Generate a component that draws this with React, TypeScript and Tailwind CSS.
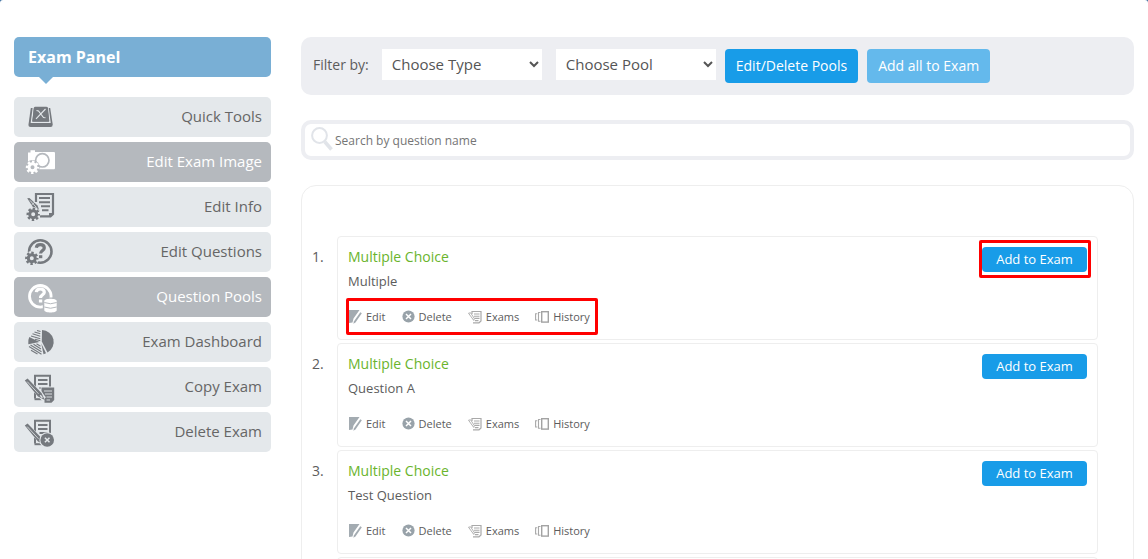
import type { ReactNode } from 'react'
import clsx from 'clsx'

const DARK = '#75797e'

const Gear = ({ x, y, color, halo }: { x: number; y: number; color: string; halo: string }) => (
  <g transform={`translate(${x} ${y})`} fill="none">
    <circle r="7.2" fill={halo} />
    <circle r="3.5" stroke={color} strokeWidth="3" />
    <circle r="5.5" stroke={color} strokeWidth="2.4" strokeDasharray="2.4 1.92" strokeDashoffset="1.2" />
  </g>
)

const QuestionMark = ({ x, y, color }: { x: number; y: number; color: string }) => (
  <g transform={`translate(${x} ${y})`}>
    <path d="M-4 -3.2C-3.7 -5.4 -2 -6.3 0 -6.3C2.4 -6.3 4 -5 4 -3.1C4 -0.6 0.2 -0.4 0.2 2.6" fill="none" stroke={color} strokeWidth="3.2" />
    <rect x="-1.4" y="4.2" width="3.4" height="3" fill={color} />
  </g>
)

const Pen = () => (
  <>
    <path d="M3 9L20 27" stroke="#e4e8eb" strokeWidth="5.4" />
    <path d="M0.8 8.6L3.6 6.6L17.5 21L20.8 28L14 24.5Z" fill={DARK} />
    <path d="M3.2 9.6L14.5 21.8" stroke="#e4e8eb" strokeWidth="0.8" />
    <path d="M16.2 23.3L18.4 25.7" stroke="#e4e8eb" strokeWidth="1.3" />
  </>
)

const Sheet = () => (
  <>
    <path d="M11 26.5V3.7H26V20" fill="none" stroke={DARK} strokeWidth="2" />
    <path d="M10.5 27.2H19" stroke={DARK} strokeWidth="2" />
    <path d="M14 8H23.5M14 12H23.5M15.5 16H23.5" stroke={DARK} strokeWidth="2" />
  </>
)

const MenuIcon = ({ children }: { children: ReactNode }) => (
  <svg width="34" height="32" viewBox="0 -1 34 32" aria-hidden="true">
    {children}
  </svg>
)

const menuItems = [
  {
    label: 'Quick Tools',
    active: false,
    icon: (
      <>
        <path d="M6.8 6H26.2L28.7 22.5Q28.8 25 26.5 25H6.7Q4.3 25 4.5 22.5Z" fill={DARK} />
        <path d="M9.4 5L7.4 20.4H26L24 5" fill="none" stroke="#e4e8eb" strokeWidth="1.3" />
        <path d="M11.4 4.7H22.2Q23.8 4.7 24 6L25.2 18.3Q25.2 19.6 24 19.6H9.6Q8.4 19.6 8.5 18.3L9.8 6Q10 4.7 11.4 4.7Z" fill={DARK} />
        <path d="M21.5 7L12 16.8M12.5 8.5L14.5 9L19.5 15.5L21.5 15.8" fill="none" stroke="#e4e8eb" strokeWidth="1.1" />
      </>
    ),
  },
  {
    label: 'Edit Exam Image',
    active: true,
    icon: (
      <>
        <path d="M4 5.5H6.5V3.3H11V5H30Q31 5 31 6V21Q31 22.2 30 22.2H4Z" fill="#fff" />
        <circle cx="18.3" cy="13.3" r="6.7" fill="#fff" stroke="#b5b9be" strokeWidth="1.7" />
        <Gear x={8.5} y={20.3} color="#fff" halo="#b5b9be" />
      </>
    ),
  },
  {
    label: 'Edit Info',
    active: false,
    icon: (
      <>
        <path d="M12 10V2H29V22L26.5 24.3H16" fill="none" stroke={DARK} strokeWidth="2.2" />
        <path d="M25 25V21H29.5Z" fill={DARK} />
        <path d="M15 6H26M15 10.2H26M17 14.2H26M18 18.2H24.5" stroke={DARK} strokeWidth="2" />
        <path d="M3.2 6.2L5.4 6L13.5 13.5L15.5 19L10 16.8Z" fill={DARK} />
        <path d="M6 8.4L12.5 15.6M7.5 13L11 10" stroke="#e4e8eb" strokeWidth="0.8" />
        <Gear x={9.2} y={22.3} color={DARK} halo="#e4e8eb" />
      </>
    ),
  },
  {
    label: 'Edit Questions',
    active: false,
    icon: (
      <>
        <circle cx="16.3" cy="14.5" r="11.2" fill="none" stroke={DARK} strokeWidth="2.6" />
        <QuestionMark x={16.3} y={14} color={DARK} />
        <Gear x={7.8} y={21.3} color={DARK} halo="#e4e8eb" />
      </>
    ),
  },
  {
    label: 'Question Pools',
    active: true,
    icon: (
      <>
        <circle cx="16.3" cy="14.3" r="10.8" fill="none" stroke="#fff" strokeWidth="2.8" />
        <QuestionMark x={16.3} y={13.3} color="#fff" />
        <rect x="18.8" y="15.5" width="15" height="15.5" rx="3" fill="#b5b9be" />
        <path d="M20.3 19C20.3 16 32.7 16 32.7 19V28.3C32.7 31.3 20.3 31.3 20.3 28.3Z" fill="#fff" />
        <path d="M20.3 20.5Q26.5 23 32.7 20.5M20.3 25Q26.5 27.5 32.7 25" fill="none" stroke="#b5b9be" strokeWidth="1" />
      </>
    ),
  },
  {
    label: 'Exam Dashboard',
    active: false,
    icon: (
      <>
        <path d="M17.8 14.5L18 3A12 12 0 0 1 23.5 25.5Z" fill={DARK} />
        <path d="M17.3 16.5L22 26.2L19.5 27.3Z" fill={DARK} />
        <path d="M15.5 15L4.3 17.3Q3.8 13 5.3 10Z" fill={DARK} />
        <path
          d="M13 3.5L16.5 4.5M10.5 5L16.3 6.8M8.5 6.8L16.3 9.2M7 9L16.3 11.8M11 12.3L16.3 13.8M9.5 17.3L17 22M12.5 16.8L16.5 19.3M6.5 18L17.5 24.8M5 19.5L17.5 27.2M7 23.2L13.5 27"
          stroke={DARK}
          strokeWidth="1.1"
        />
      </>
    ),
  },
  {
    label: 'Copy Exam',
    active: false,
    icon: (
      <>
        <Sheet />
        <path d="M16.5 14.5H31V31H20L16.5 26Z" fill="#e4e8eb" />
        <path d="M17.5 15.5H30.2V28L27.5 30.8H20.5V24L17.5 19Z" fill={DARK} />
        <path d="M20 19H28M21 22H28M22.5 25H28M22.5 28H26" stroke="#e4e8eb" strokeWidth="0.9" />
        <Pen />
      </>
    ),
  },
  {
    label: 'Delete Exam',
    active: false,
    icon: (
      <>
        <Sheet />
        <Pen />
        <circle cx="23.2" cy="23" r="7.8" fill="#e4e8eb" />
        <circle cx="23.2" cy="23" r="6.8" fill={DARK} />
        <path d="M20.9 20.7L25.5 25.3M25.5 20.7L20.9 25.3" stroke="#e4e8eb" strokeWidth="1.5" />
      </>
    ),
  },
]

const actions = [
  {
    label: 'Edit',
    icon: (
      <svg width="13" height="14" viewBox="0 0 13 14" aria-hidden="true">
        <path d="M0 0H10.5L4.5 8.5L3.5 12.5L0 13Z" fill="#a3abb1" />
        <path d="M11.3 2.2L12.8 3.3L6.5 12.5L4.3 13.8L5 11.3Z" fill="#a3abb1" />
      </svg>
    ),
  },
  {
    label: 'Delete',
    icon: (
      <svg width="13" height="14" viewBox="0 0 13 14" aria-hidden="true">
        <circle cx="6.5" cy="6.5" r="6.1" fill="#98a2a9" />
        <path d="M4 4L9 9M9 4L4 9" stroke="#fff" strokeWidth="1.5" />
      </svg>
    ),
  },
  {
    label: 'Exams',
    icon: (
      <svg width="14" height="14" viewBox="0 0 14 14" aria-hidden="true">
        <path d="M4 4V1.5H13V11L11 12.8H5" fill="none" stroke="#a9a9a9" strokeWidth="1.2" />
        <path d="M6 4H11.5M6 6.2H11.5M6.5 8.4H11.5M7 10.6H10.5" stroke="#a9a9a9" strokeWidth="1.1" />
        <path d="M0.5 3.2L5.8 10.5M2.6 2.8L6.3 8.5M0.5 3.2L2.6 2.8M5.8 10.5L6.3 8.5" stroke="#a9a9a9" strokeWidth="0.9" />
      </svg>
    ),
  },
  {
    label: 'History',
    icon: (
      <svg width="14" height="14" viewBox="0 0 14 14" aria-hidden="true">
        <rect x="6.7" y="1.7" width="6.6" height="10.4" fill="none" stroke="#a3a3a3" strokeWidth="1.4" />
        <path d="M5.5 2.5H3.5V11.3H5.5M2.3 3.8H0.6V10H2.3" fill="none" stroke="#a9a9a9" strokeWidth="1.1" />
      </svg>
    ),
  },
]

const questions = [
  { id: 1, type: 'Multiple Choice', name: 'Multiple' },
  { id: 2, type: 'Multiple Choice', name: 'Question A' },
  { id: 3, type: 'Multiple Choice', name: 'Test Question' },
]

const Sidebar = () => (
  <aside className="w-[257px] shrink-0">
    <h2 className="relative flex h-10 items-center rounded-[5px] bg-[#79afd5] px-3.5 text-base font-bold text-white">
      Exam Panel
      <span className="absolute top-full left-[25px] border-x-[7px] border-t-[7px] border-x-transparent border-t-[#79afd5]" />
    </h2>
    <nav className="mt-5 flex flex-col gap-[5px]">
      {menuItems.map((item) => (
        <a
          key={item.label}
          href="#"
          className={clsx(
            'flex h-10 items-center justify-between rounded-[5px] pr-[9px] pl-[10px] text-[15px]',
            item.active ? 'bg-[#b5b9be] text-white' : 'bg-[#e4e8eb] text-[#666]'
          )}
        >
          <MenuIcon>{item.icon}</MenuIcon>
          <span className="pb-0.5">{item.label}</span>
        </a>
      ))}
    </nav>
  </aside>
)

const FilterBar = () => (
  <div className="flex items-start rounded-[10px] bg-[#edeef2] p-3 text-sm">
    <span className="mr-[13px] leading-[31px]">Filter by:</span>
    <select aria-label="Type" className="mr-3.5 h-[31px] w-40 bg-white pb-0.5 pl-1.5 text-[15px] text-[#555]">
      <option>Choose Type</option>
    </select>
    <select aria-label="Pool" className="mr-[9px] h-[31px] w-40 bg-white pb-0.5 pl-1.5 text-[15px] text-[#555]">
      <option>Choose Pool</option>
    </select>
    <button className="mr-[9px] h-[34px] rounded bg-[#189ce8] px-[11px] text-white">Edit/Delete Pools</button>
    <button className="h-[34px] rounded bg-[#64b9ec] px-[11px] text-white">Add all to Exam</button>
  </div>
)

const SearchBox = () => (
  <label className="mt-[25px] flex h-10 items-center rounded-[10px] border-4 border-[#edeef2] bg-white pl-1.5">
    <svg width="24" height="28" viewBox="0 0 24 28" className="shrink-0" aria-hidden="true">
      <circle cx="8.5" cy="9.5" r="7.4" fill="none" stroke="#e1e4e9" strokeWidth="2" />
      <path d="M13.8 15.8L20.5 23.5" stroke="#e1e4e9" strokeWidth="3.6" />
    </svg>
    <input
      type="text"
      aria-label="Search by question name"
      placeholder="Search by question name"
      className="h-full min-w-0 flex-1 text-xs outline-none placeholder:text-[#757575]"
    />
  </label>
)

const QuestionList = () => (
  <ol className="mt-[25px] flex flex-col gap-[3px] rounded-[15px] border border-[#eee] pt-[50px] pr-[35px] pb-12 pl-[10px]">
    {questions.map((question, index) => (
      <li key={question.id} className="flex">
        <span className="w-[25px] shrink-0 pt-[11px] text-sm leading-5">{question.id}.</span>
        <div className="flex flex-1 items-start justify-between rounded border border-[#eee] px-[10px] pt-[10px] pb-3">
          <div>
            <h3 className="text-sm leading-5 text-[#6ab42d]">{question.type}</h3>
            <p className="mt-1 text-[13px] leading-5">{question.name}</p>
            <div className="relative mt-4 flex gap-4 pl-px text-[11px] leading-5">
              {actions.map((action) => (
                <button key={action.label} className="flex items-center gap-1">
                  {action.icon}
                  {action.label}
                </button>
              ))}
              {index === 0 && (
                <span className="pointer-events-none absolute -top-[9px] -right-2 -bottom-2 -left-0.5 rounded-[2px] border-3 border-[#f00]" />
              )}
            </div>
          </div>
          <div className="relative">
            <button className="block h-[25px] w-[105px] rounded bg-[#189ce8] text-[13px] text-white">Add to Exam</button>
            {index === 0 && (
              <span className="pointer-events-none absolute -top-[7px] -right-1 -bottom-1.5 -left-[3px] rounded-[2px] border-3 border-[#f00]" />
            )}
          </div>
        </div>
      </li>
    ))}
    {/* Empty slot for the next question */}
    <li className="ml-[25px] h-[104px] rounded border border-[#eee]" />
  </ol>
)

const App = () => {
  return (
    <div className="min-h-screen bg-[#3c6f9f] font-['Open_Sans',sans-serif] text-[#5c5c5c]">
      <div className="flex min-h-screen items-start gap-[30px] rounded-t-[3px] bg-white px-3.5 pt-[37px]">
        <Sidebar />
        <main className="min-w-0 flex-1">
          <FilterBar />
          <SearchBox />
          <QuestionList />
        </main>
      </div>
    </div>
  )
}

export default App
